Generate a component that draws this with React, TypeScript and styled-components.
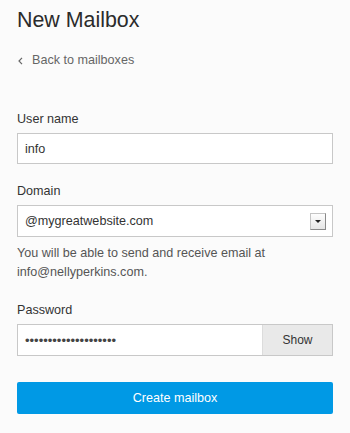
import React from 'react'
import styled, { createGlobalStyle } from 'styled-components'

const GlobalStyle = createGlobalStyle`
  html, body {
    margin: 0;
    padding: 0;
    background: #fbfbfb;
  }
  body {
    font-family: 'Liberation Sans', Arial, Helvetica, sans-serif;
    color: #333;
  }
`

const Page = styled.div`
  padding: 7px 17px 20px;
  width: 316px;
`

const Title = styled.h1`
  margin: 0;
  font-size: 21.4px;
  line-height: 26px;
  font-weight: normal;
  color: #2b2b2b;
`

const BackLink = styled.a`
  display: flex;
  align-items: center;
  gap: 9px;
  margin-top: 19px;
  padding-left: 1px;
  font-size: 12.6px;
  line-height: 16px;
  color: #666;
  text-decoration: none;
  cursor: pointer;
  svg {
    margin-top: 1px;
  }
`

const Field = styled.div<{ $gap: number }>`
  margin-top: ${(p) => p.$gap}px;
  display: flex;
  flex-direction: column;
`

const Label = styled.label`
  font-size: 12.6px;
  line-height: 16px;
  color: #333;
  margin-bottom: 6px;
`

const TextInput = styled.input`
  box-sizing: border-box;
  height: 31px;
  width: 100%;
  border: 1px solid #c8c8c8;
  background: #fff;
  padding: 0 7px;
  font-family: inherit;
  font-size: 12.6px;
  color: #333;
  outline: none;
`

const SelectBox = styled.div`
  box-sizing: border-box;
  height: 32px;
  border: 1px solid #c8c8c8;
  background: #fff;
  display: flex;
  align-items: center;
  justify-content: space-between;
  padding: 0 6px 0 7px;
  font-size: 12.6px;
  color: #333;
`

const SelectArrow = styled.span`
  box-sizing: border-box;
  width: 16px;
  height: 17px;
  border: 1px solid #c4c4c4;
  border-right-color: #8a8a8a;
  border-bottom-color: #8a8a8a;
  background: linear-gradient(#fdfdfd, #e6e6e6);
  display: flex;
  align-items: center;
  justify-content: center;
  &::after {
    content: '';
    border-left: 3px solid transparent;
    border-right: 3px solid transparent;
    border-top: 3px solid #222;
  }
`

const Hint = styled.p`
  margin: 7px 0 0;
  font-size: 12.6px;
  line-height: 19px;
  color: #555;
`

const PasswordRow = styled.div`
  box-sizing: border-box;
  height: 32px;
  display: flex;
  border: 1px solid #c8c8c8;
  background: #fff;
`

const Dots = styled.div`
  flex: 1;
  display: flex;
  align-items: center;
  padding-left: 7px;
  font-size: 13px;
  color: #444;
`

const ShowButton = styled.button`
  width: 70px;
  border: none;
  border-left: 1px solid #dcdcdc;
  background: #e9e9e9;
  font-family: inherit;
  font-size: 12px;
  color: #333;
  padding: 0;
  cursor: pointer;
`

const PrimaryButton = styled.button`
  margin-top: 26px;
  width: 100%;
  height: 32px;
  border: none;
  border-radius: 2px;
  background: #0099e5;
  color: #fff;
  font-family: inherit;
  font-size: 12.6px;
  padding: 0;
  cursor: pointer;
`

const App = () => {
  return (
    <>
      <GlobalStyle />
      <Page>
        <Title>New Mailbox</Title>
        <BackLink>
          <svg width='5' height='8' viewBox='0 0 5 8'>
            <path d='M4 0.8 L1 4 L4 7.2' fill='none' stroke='#666' strokeWidth='1.2' />
          </svg>
          Back to mailboxes
        </BackLink>

        <Field $gap={43}>
          <Label>User name</Label>
          <TextInput defaultValue='info' />
        </Field>

        <Field $gap={19}>
          <Label>Domain</Label>
          <SelectBox>
            <span>@mygreatwebsite.com</span>
            <SelectArrow />
          </SelectBox>
        </Field>
        <Hint>
          You will be able to send and receive email at
          <br />
          info@nellyperkins.com.
        </Hint>

        <Field $gap={20}>
          <Label>Password</Label>
          <PasswordRow>
            <Dots>{'•'.repeat(20)}</Dots>
            <ShowButton>Show</ShowButton>
          </PasswordRow>
        </Field>

        <PrimaryButton>Create mailbox</PrimaryButton>
      </Page>
    </>
  )
}

export default App
